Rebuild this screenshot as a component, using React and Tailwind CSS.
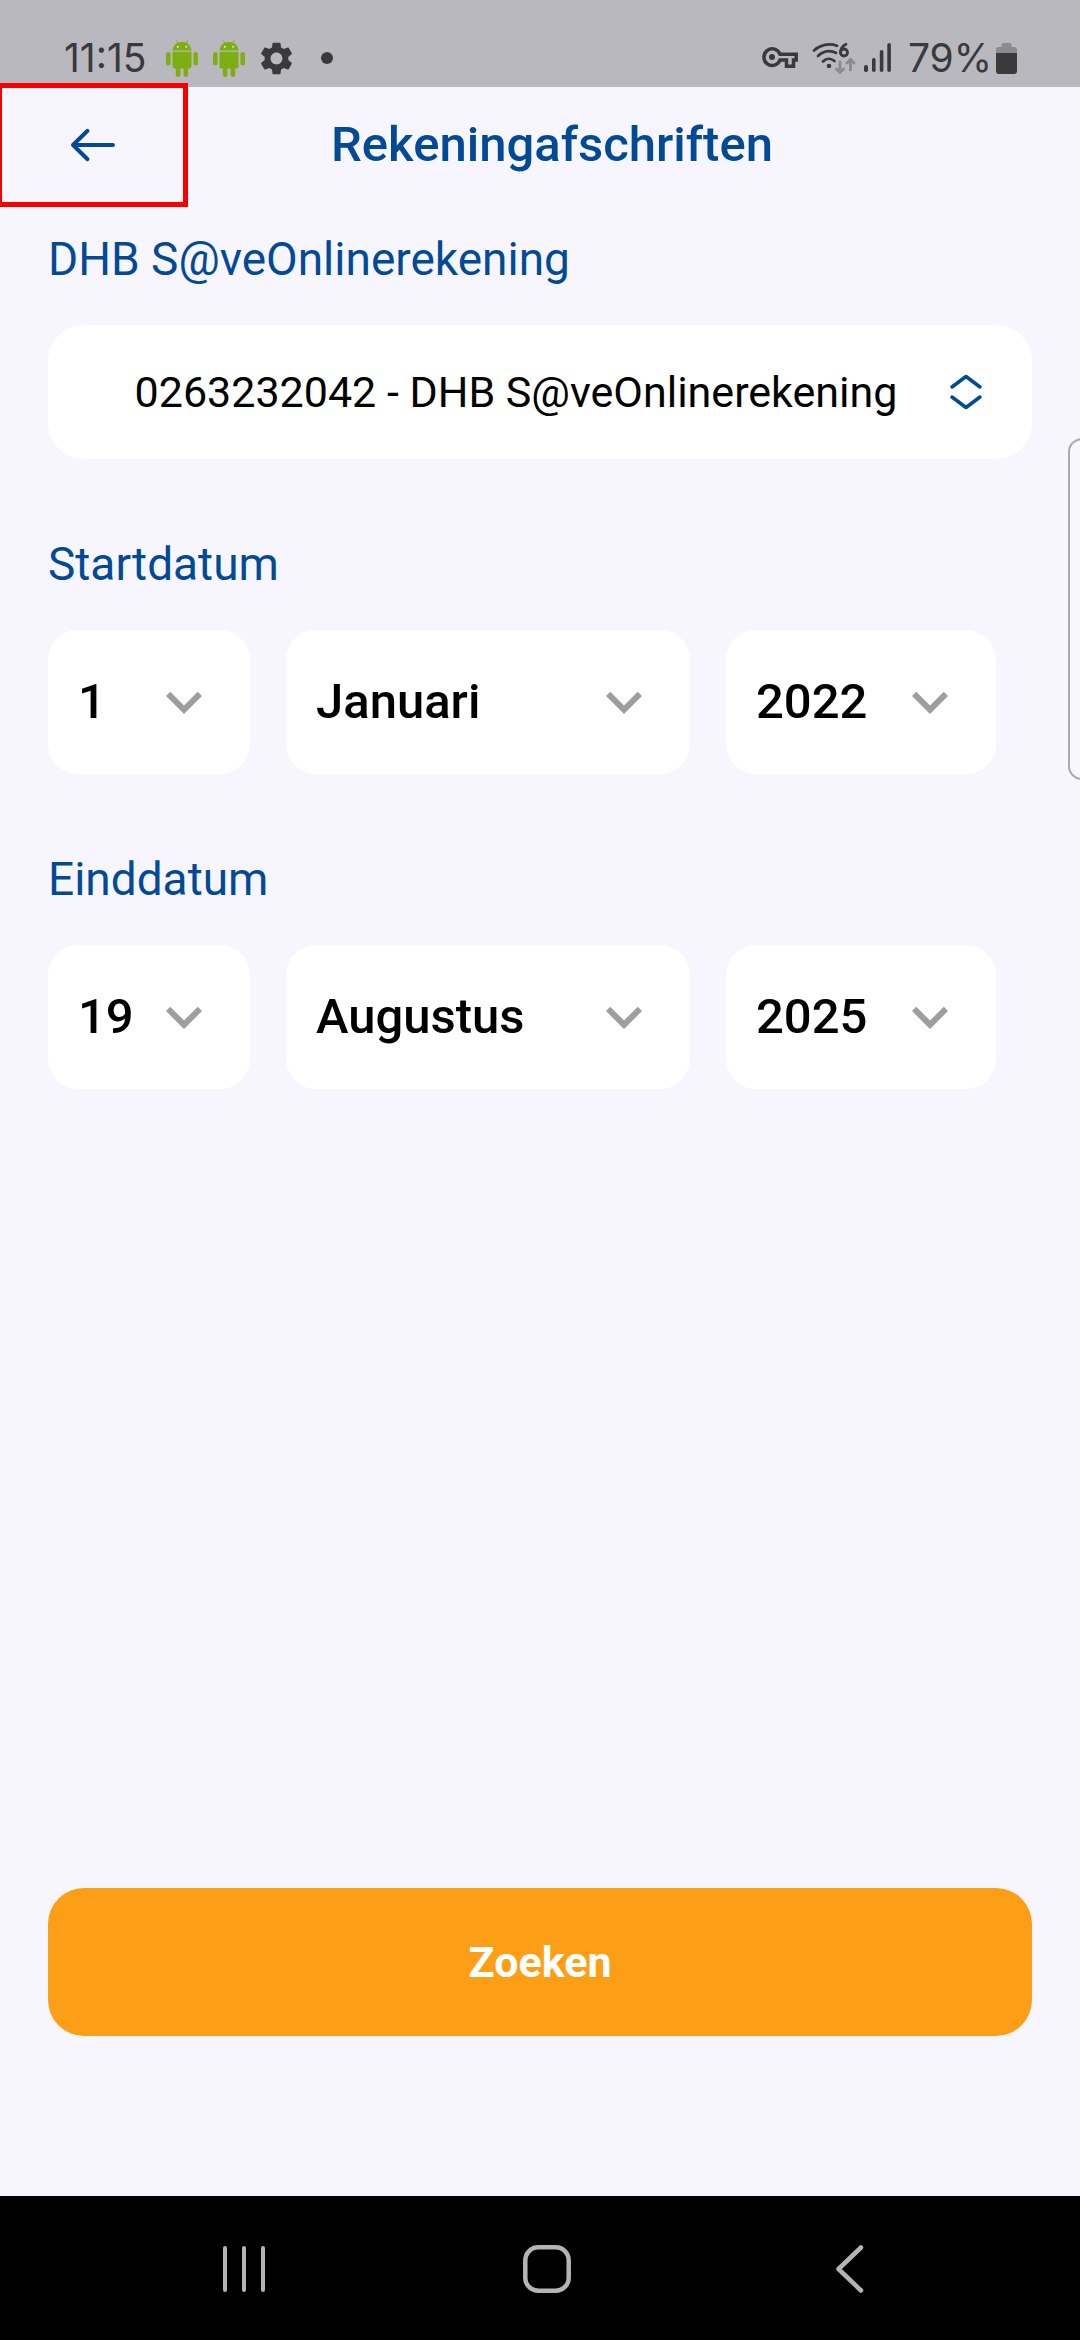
import React from 'react';

const DAYS = Array.from({ length: 31 }, (_, i) => String(i + 1));
const MONTHS = [
  'Januari', 'Februari', 'Maart', 'April', 'Mei', 'Juni',
  'Juli', 'Augustus', 'September', 'Oktober', 'November', 'December',
];
const YEARS = ['2020', '2021', '2022', '2023', '2024', '2025'];

function AndroidIcon() {
  return (
    <svg className="h-[37px] w-8" viewBox="0 0 32 37" fill="#7fae12" aria-hidden="true">
      <path d="M6.500 10.500C6.800 6.800 8.700 4.200 11.300 2.900L9.800 .6l.6-.4 1.600 2.400c2.500-.9 5.500-.9 8 0L21.600 .2l.6 .4-1.500 2.300c2.600 1.300 4.500 3.900 4.800 7.600z" />
      <circle cx="11.800" cy="6.800" r="1" fill="#dfe8cf" />
      <circle cx="20.200" cy="6.800" r="1" fill="#dfe8cf" />
      <path d="M6.500 11.800h19V26a2.500 2.500 0 0 1-2.500 2.500H9A2.500 2.500 0 0 1 6.500 26z" />
      <rect x="0" y="12" width="4.600" height="13.500" rx="2.300" />
      <rect x="27.400" y="12" width="4.600" height="13.500" rx="2.300" />
      <rect x="9.800" y="24" width="4.600" height="13" rx="2.300" />
      <rect x="17.600" y="24" width="4.600" height="13" rx="2.300" />
    </svg>
  );
}

function GearIcon() {
  return (
    <svg className="h-[33px] w-[33px]" viewBox="2 2 20 20" fill="#3a3a3c" aria-hidden="true">
      <path d="M19.140 12.940c.04-.3.06-.61.06-.94 0-.32-.02-.64-.07-.94l2.030-1.580c.18-.14.23-.41.12-.61l-1.920-3.320c-.12-.22-.37-.29-.59-.22l-2.390.96c-.5-.38-1.030-.7-1.620-.94l-.36-2.540c-.04-.24-.24-.41-.48-.41h-3.840c-.24 0-.43.17-.47.41l-.36 2.540c-.59.24-1.130.57-1.620.94l-2.390-.96c-.22-.08-.47 0-.59.22L2.740 8.870c-.12.21-.08.47.12.61l2.030 1.580c-.05.3-.09.63-.09.94s.02.64.07.94l-2.030 1.580c-.18.14-.23.41-.12.61l1.920 3.320c.12.22.37.29.59.22l2.390-.96c.5.38 1.030.7 1.620.94l.36 2.540c.05.24.24.41.48.41h3.840c.24 0 .44-.17.47-.41l.36-2.540c.59-.24 1.130-.56 1.620-.94l2.390.96c.22.08.47 0 .59-.22l1.920-3.320c.12-.22.07-.47-.12-.61zM12 15.600c-1.980 0-3.600-1.620-3.600-3.600s1.620-3.600 3.600-3.600 3.600 1.620 3.600 3.600-1.620 3.600-3.600 3.600" />
    </svg>
  );
}

function KeyIcon() {
  return (
    <svg className="h-[22px] w-9" viewBox="0 0 36 22" fill="none" stroke="#3a3a3c" aria-hidden="true">
      <path strokeWidth="3.500" strokeLinejoin="miter" d="M18 7.300H34.200V13H31.500V19.200H24.500V13H18A8.300 8.300 0 1 1 18 7.300Z" />
      <circle cx="10" cy="10" r="3" fill="#3a3a3c" stroke="none" />
    </svg>
  );
}

function WifiIcon() {
  return (
    <svg className="h-8 w-[44px]" viewBox="0 0 44 32" fill="none" strokeLinecap="round" aria-hidden="true">
      <g stroke="#3a3a3c" strokeWidth="2.800">
        <path d="M2 8.500C8 3 17 .8 25 3.800" />
        <path d="M6 14C11 9 18 8 24 10.800" />
        <path d="M11 19.500c3.500-3.500 8-3.500 11.500-.5" />
        <path d="M34 2.200C30.500 4 28.500 7 28.500 10.500" />
        <circle cx="32" cy="10.500" r="3.500" />
      </g>
      <circle cx="17" cy="24" r="2.300" fill="#3a3a3c" />
      <g stroke="#8b8a90" strokeWidth="2.800">
        <path d="M28 20v10M24.500 27l3.500 3.500 3.500-3.500" />
        <path d="M38.500 28V18M35 21l3.500-3.500L42 21" />
      </g>
    </svg>
  );
}

function SignalIcon() {
  return (
    <svg className="h-[30px] w-7" viewBox="0 0 28 30" fill="#3a3a3c" aria-hidden="true">
      <rect x="0" y="22" width="4" height="7" rx="1.800" />
      <rect x="8" y="15" width="3.600" height="14" rx="1.800" />
      <rect x="15.800" y="7" width="3.600" height="22" rx="1.800" />
      <rect x="23.300" y="0" width="3.600" height="29" rx="1.800" />
    </svg>
  );
}

function BatteryIcon() {
  return (
    <svg className="h-[31px] w-[21px]" viewBox="0 0 21 31" aria-hidden="true">
      <path fill="#8b8a90" d="M7 0h7a1.500 1.500 0 0 1 1.500 1.500V4H18a3 3 0 0 1 3 3v4H0V7a3 3 0 0 1 3-3h2.500V1.500A1.500 1.500 0 0 1 7 0" />
      <path fill="#3a3a3a" d="M0 10h21v18a3 3 0 0 1-3 3H3a3 3 0 0 1-3-3z" />
    </svg>
  );
}

function StatusBar() {
  return (
    <div className="flex h-[87px] items-center justify-between bg-[#b9b8bf] pr-[63px] pl-[64px] pt-[29px] font-['Inter',sans-serif] text-[39px] leading-10 font-normal text-[#3a3a3c]">
      <div className="flex items-center">
        <span className="w-[102px]">11:15</span>
        <span className="flex items-center gap-[15px]">
          <AndroidIcon />
          <AndroidIcon />
          <GearIcon />
        </span>
        <span className="ml-7 size-3 rounded-full bg-[#3a3a3c]" />
      </div>
      <div className="flex items-center">
        <KeyIcon />
        <span className="ml-[14px]"><WifiIcon /></span>
        <span className="ml-2"><SignalIcon /></span>
        <span className="ml-3 w-[92px] text-center">79%</span>
        <BatteryIcon />
      </div>
    </div>
  );
}

function DateSelect({ label, options, value, className }) {
  return (
    <div className={`grid items-center ${className}`}>
      <select
        aria-label={label}
        defaultValue={value}
        className="col-start-1 row-start-1 h-36 w-full appearance-none rounded-[30px] bg-white pl-[30px] text-[49px] leading-[56px] font-medium text-black"
      >
        {options.map((o) => (
          <option key={o}>{o}</option>
        ))}
      </select>
      <svg
        className="pointer-events-none col-start-1 row-start-1 mr-[30px] size-[72px] justify-self-end"
        viewBox="0 0 24 24"
        fill="#9e9e9e"
        aria-hidden="true"
      >
        <path d="M16.590 8.590 12 13.170 7.410 8.590 6 10l6 6 6-6z" />
      </svg>
    </div>
  );
}

function DateField({ label, day, month, year }) {
  return (
    <fieldset className="mt-[79px]">
      <legend className="text-[46px] leading-[52px] text-[#034a96]">{label}</legend>
      <div className="mt-10 flex gap-9 pr-9">
        <DateSelect label={`${label} dag`} options={DAYS} value={day} className="flex-[202]" />
        <DateSelect label={`${label} maand`} options={MONTHS} value={month} className="flex-[404]" />
        <DateSelect label={`${label} jaar`} options={YEARS} value={year} className="flex-[270]" />
      </div>
    </fieldset>
  );
}

export default function App() {
  return (
    <div className="relative flex min-h-screen flex-col overflow-hidden bg-[#f7f6ff] font-['Roboto',sans-serif]">
      <StatusBar />

      <header className="flex h-[120px] items-center pr-[164px] pb-1">
        <button
          type="button"
          aria-label="Terug"
          className="flex h-[124px] w-[188px] items-center justify-center border-[5px] border-l-2 border-[#f80000]"
        >
          <svg className="h-9 w-12" viewBox="0 0 48 36" fill="none" stroke="#034a96" strokeWidth="4" strokeLinecap="round" strokeLinejoin="round" aria-hidden="true">
            <path d="M44 18H4M18.500 3.800 4 18l14.500 14.200" />
          </svg>
        </button>
        <h1 className="flex-1 text-center text-[49px] leading-[56px] font-medium text-[#034a96]">Rekeningafschriften</h1>
      </header>

      <main className="flex flex-1 flex-col px-12 pt-[26px] pb-40">
        <label htmlFor="account" className="text-[46px] leading-[52px] text-[#034a96]">
          DHB S@veOnlinerekening
        </label>
        <div className="mt-10 grid items-center">
          <select
            id="account"
            className="col-start-1 row-start-1 h-[134px] w-full appearance-none rounded-[36px] bg-white pr-[84px] pl-9 text-center text-[43px] leading-[52px] text-black"
          >
            <option>0263232042 - DHB S@veOnlinerekening</option>
          </select>
          <svg
            className="pointer-events-none col-start-1 row-start-1 mr-12 h-9 w-9 justify-self-end"
            viewBox="0 0 36 36"
            fill="none"
            stroke="#034a96"
            strokeWidth="3.500"
            strokeLinecap="round"
            strokeLinejoin="round"
            aria-hidden="true"
          >
            <path d="M4 13 18 2.500 32 13M4 23l14 10.500L32 23" />
          </svg>
        </div>

        <DateField label="Startdatum" day="1" month="Januari" year="2022" />
        <DateField label="Einddatum" day="19" month="Augustus" year="2025" />

        <button type="button" className="mt-auto h-[148px] rounded-[36px] bg-[#fd9f16] text-[43px] leading-[52px] font-bold text-white">
          Zoeken
        </button>
      </main>

      <nav className="flex h-36 items-center bg-black pt-0.5 pr-[78px] pl-[92px]">
        <button type="button" aria-label="Recente apps" className="flex flex-1 justify-center">
          <svg className="size-12" viewBox="0 0 48 48" stroke="#b4b4b4" strokeWidth="4" strokeLinecap="round" aria-hidden="true">
            <path d="M5 3v42M24 3v42M43 3v42" />
          </svg>
        </button>
        <button type="button" aria-label="Startscherm" className="flex flex-1 justify-center">
          <svg className="size-12" viewBox="0 0 48 48" fill="none" stroke="#b4b4b4" strokeWidth="4.500" aria-hidden="true">
            <rect x="2.300" y="2.300" width="43.400" height="43.400" rx="13" />
          </svg>
        </button>
        <button type="button" aria-label="Vorige" className="flex flex-1 justify-center">
          <svg className="size-12" viewBox="0 0 48 48" fill="none" stroke="#b4b4b4" strokeWidth="4.500" strokeLinecap="round" strokeLinejoin="round" aria-hidden="true">
            <path d="M35 2.500 12.500 24 35 45.500" />
          </svg>
        </button>
      </nav>

      <div className="absolute top-[438px] -right-2 h-[342px] w-5 rounded-l-[14px] border-2 border-[#a9a9ae] bg-[#f8f7ff]" />
    </div>
  );
}
